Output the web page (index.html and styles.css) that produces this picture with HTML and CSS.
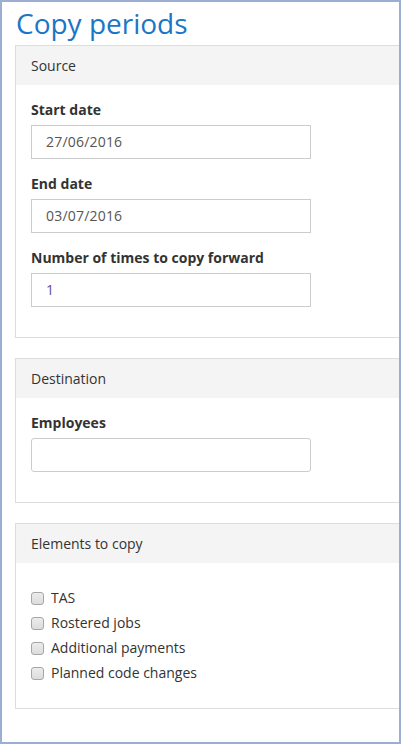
FILE: index.html
```html
<!DOCTYPE html>
<html>
<head>
<meta charset="utf-8">
<link rel="stylesheet" href="styles.css">
</head>
<body>
<div class="frame">
  <h1 class="title">Copy periods</h1>
  <div class="panels">
    <section class="panel">
      <div class="panel-heading">Source</div>
      <div class="panel-body">
        <div class="field">
          <label class="field-label">Start date</label>
          <div class="input">27/06/2016</div>
        </div>
        <div class="field">
          <label class="field-label">End date</label>
          <div class="input">03/07/2016</div>
        </div>
        <div class="field">
          <label class="field-label">Number of times to copy forward</label>
          <div class="input input-num">1</div>
        </div>
      </div>
    </section>
    <section class="panel">
      <div class="panel-heading">Destination</div>
      <div class="panel-body">
        <div class="field">
          <label class="field-label">Employees</label>
          <div class="input input-rounded"></div>
        </div>
      </div>
    </section>
    <section class="panel">
      <div class="panel-heading">Elements to copy</div>
      <div class="panel-body">
        <ul class="checks">
          <li class="check"><span class="box"></span>TAS</li>
          <li class="check"><span class="box"></span>Rostered jobs</li>
          <li class="check"><span class="box"></span>Additional payments</li>
          <li class="check"><span class="box"></span>Planned code changes</li>
        </ul>
      </div>
    </section>
  </div>
</div>
</body>
</html>
```
FILE: styles.css
```css
* { box-sizing: border-box; }
html, body { margin: 0; padding: 0; background: #fff; }
body {
  font-family: "Open Sans", "Liberation Sans", sans-serif;
  font-size: 14px;
  line-height: 20px;
  color: #333;
}
.frame {
  width: 401px;
  height: 744px;
  border: 2px solid #9eaed3;
  padding: 0 0 0 13px;
  overflow: hidden;
}
.title {
  margin: 5px 0 5px 1px;
  font-size: 28px;
  line-height: 33px;
  font-weight: 400;
  color: #1a76c6;
  white-space: nowrap;
}
.panels {
  width: 420px;
  display: flex;
  flex-direction: column;
  gap: 20px;
}
.panel {
  border: 1px solid #dddddd;
  background: #fff;
}
.panel-heading {
  height: 39px;
  padding: 10px 15px 0;
  background: #f4f4f4;
  color: #333;
}
.panel-body {
  padding: 15px;
}
.field {
  margin-bottom: 15px;
}
.field-label {
  display: block;
  font-weight: 700;
  margin-bottom: 5px;
}
.input {
  width: 280px;
  height: 34px;
  border: 1px solid #cccccc;
  padding: 6px 14px;
  color: #555;
  letter-spacing: 0.2px;
}
.input-num { color: #674d96; }
.input-rounded { border-radius: 3px; }
.checks {
  list-style: none;
  margin: 10px 0;
  padding: 0;
  display: flex;
  flex-direction: column;
  gap: 5px;
}
.check {
  display: flex;
  align-items: center;
  gap: 7px;
}
.box {
  width: 13px;
  height: 13px;
  border: 1px solid #a6a6a6;
  border-radius: 3px;
  background: linear-gradient(#ececec, #dcdcdc);
}
```
